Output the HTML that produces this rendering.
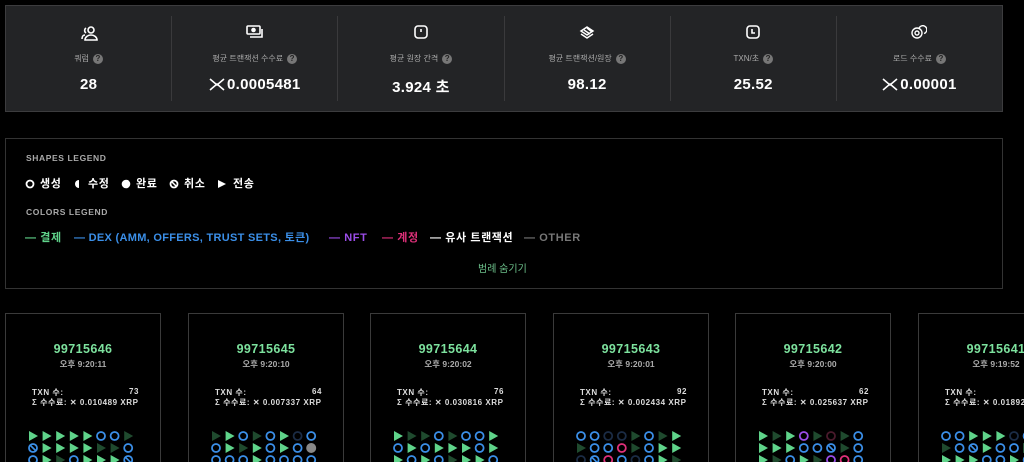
<!DOCTYPE html>
<html><head><meta charset="utf-8"><style>
*{margin:0;padding:0;box-sizing:border-box}
html,body{width:1024px;height:462px;overflow:hidden}
body{background:#000;font-family:"Liberation Sans","Noto Sans CJK KR",sans-serif;color:#fff;position:relative}
.stats{position:absolute;left:5px;top:5px;width:998px;height:107px;background:#232426;border:1px solid #3c3c3e;display:flex;padding:10px 0}
.st{flex:1;text-align:center;border-left:1px solid #3a3a3c;position:relative}
.st:first-child{border-left:none}
.ic{position:absolute;top:9px;left:0;right:0;height:18px;display:flex;justify-content:center}
.lb{position:absolute;top:37px;left:0;right:0;font-size:8px;color:#aaa;display:flex;justify-content:center;align-items:center;gap:4px}
.q{width:10px;height:10px;border-radius:50%;background:#777;color:#222;font-size:8px;font-weight:bold;line-height:10px}
.v{position:absolute;top:60px;left:0;right:0;font-size:15px;font-weight:bold;display:flex;justify-content:center;align-items:center;gap:2px;letter-spacing:.3px}
.legend{position:absolute;left:5px;top:138px;width:998px;height:151px;border:1px solid #333}
.h{position:absolute;left:20px;font-size:8.5px;font-weight:bold;color:#aaa;letter-spacing:.6px}
.a{position:absolute;font-size:11px;font-weight:bold;white-space:nowrap;line-height:12px;letter-spacing:.6px}
.card{position:absolute;top:313px;width:156px;height:160px;border:1px solid #3a3a3a}
.bn{position:absolute;top:28px;width:100%;text-align:center;color:#7de29e;font-size:12.5px;font-weight:bold;letter-spacing:.4px}
.tm{position:absolute;top:44px;width:100%;text-align:center;color:#aaa;font-size:8.5px;font-weight:bold}
.tx{position:absolute;left:26px;right:21px;font-size:8px;font-weight:bold;color:#ddd;display:flex;justify-content:space-between;white-space:nowrap;letter-spacing:.55px}
</style></head><body>
<div class="stats">
 <div class="st"><div class="ic"><svg width="18" height="16" viewBox="0 0 18 16" fill="none" stroke="#fff" stroke-width="1.6"><circle cx="11" cy="5" r="3"/><path d="M5 15c0-3 3-5 6-5s6 2 6 5z"/><path d="M6 3a3 3 0 0 0 0 5M2 14c0-2 1-4 3-4" /></svg></div><div class="lb">쿼럼 <span class="q">?</span></div><div class="v">28</div></div>
 <div class="st"><div class="ic"><svg width="18" height="14" viewBox="0 0 18 14" fill="none" stroke="#fff" stroke-width="1.6"><rect x="1" y="1" width="13" height="8" rx="1"/><circle cx="7.5" cy="5" r="1.5" fill="#fff"/><path d="M4 12h12V4"/></svg></div><div class="lb">평균 트랜잭션 수수료 <span class="q">?</span></div><div class="v"><svg width="16" height="13" viewBox="0 0 16 13" stroke="#fff" stroke-width="1.6" fill="none"><path d="M1 1l7 6 7-6M1 12l7-6 7 6"/></svg>0.0005481</div></div>
 <div class="st"><div class="ic"><svg width="14" height="14" viewBox="0 0 14 14" fill="none" stroke="#fff" stroke-width="1.6"><rect x="1" y="1" width="12" height="12" rx="3"/><path d="M7 4v3"/></svg></div><div class="lb">평균 원장 간격 <span class="q">?</span></div><div class="v">3.924 초</div></div>
 <div class="st"><div class="ic"><svg width="16" height="16" viewBox="0 0 16 16" fill="none" stroke="#fff" stroke-width="1.5"><path d="M2 6l6-4 6 4-6 4zM2 9l6 4 6-4M5 5l6 4M8 3l5 4"/></svg></div><div class="lb">평균 트랜잭션/원장 <span class="q">?</span></div><div class="v">98.12</div></div>
 <div class="st"><div class="ic"><svg width="14" height="14" viewBox="0 0 14 14" fill="none" stroke="#fff" stroke-width="1.6"><rect x="1" y="1" width="12" height="12" rx="3"/><path d="M6 4v4h3"/></svg></div><div class="lb">TXN/초 <span class="q">?</span></div><div class="v">25.52</div></div>
 <div class="st"><div class="ic"><svg width="16" height="14" viewBox="0 0 16 14" fill="none" stroke="#fff" stroke-width="1.4"><circle cx="6" cy="8" r="5"/><circle cx="6" cy="8" r="2"/><path d="M8 3.5a4 4 0 1 1 5 5"/></svg></div><div class="lb">로드 수수료 <span class="q">?</span></div><div class="v"><svg width="16" height="13" viewBox="0 0 16 13" stroke="#fff" stroke-width="1.6" fill="none"><path d="M1 1l7 6 7-6M1 12l7-6 7 6"/></svg>0.00001</div></div>
</div>
<div class="legend">
 <div class="h" style="top:14px">SHAPES LEGEND</div>
 <svg style="position:absolute;left:19px;top:40px" width="210" height="10">
  <circle cx="5" cy="5" r="3.5" fill="none" stroke="#fff" stroke-width="1.8"/>
  <path d="M54 1a4 4 0 0 0 0 8z" fill="#fff"/>
  <circle cx="101" cy="5" r="4.3" fill="#fff"/>
  <circle cx="149" cy="5" r="3.5" fill="none" stroke="#fff" stroke-width="1.8"/><path d="M146.5 2.5l5 5" stroke="#fff" stroke-width="1.5"/>
  <path d="M193 1l8 4-8 4z" fill="#fff"/>
 </svg>
 <span class="a" style="left:34px;top:39px">생성</span>
 <span class="a" style="left:82px;top:39px">수정</span>
 <span class="a" style="left:130px;top:39px">완료</span>
 <span class="a" style="left:178px;top:39px">취소</span>
 <span class="a" style="left:227px;top:39px">전송</span>
 <div class="h" style="top:68px">COLORS LEGEND</div>
 <span class="a" style="left:19px;top:93px;color:#5fd38a">— 결제</span>
 <span class="a" style="left:68px;top:93px;color:#3b8fe8;letter-spacing:.3px">— DEX (AMM, OFFERS, TRUST SETS, 토큰)</span>
 <span class="a" style="left:323px;top:93px;color:#9b4de8">— NFT</span>
 <span class="a" style="left:376px;top:93px;color:#e0307a">— 계정</span>
 <span class="a" style="left:424px;top:93px;color:#fff">— 유사 트랜잭션</span>
 <span class="a" style="left:518px;top:93px;color:#777">— OTHER</span>
 <div style="position:absolute;top:121px;left:472px;font-size:10px;color:#6cc08a">범례 숨기기</div>
</div>
<div id="cards"></div>
<script>
var data=[
["99715646","9:20:11","73","0.010489",["TTTTTOOt","XTTTTttO","OTtOTTTX"]],
["99715645","9:20:10","64","0.007337",["tTOtOToO","OTtTOTOG","OOOTOOOO"]],
["99715644","9:20:02","76","0.030816",["TttOtOOT","OTOTTTOT","TOTOtTTO"]],
["99715643","9:20:01","92","0.002434",["OOootOtT","tOOPtOTT","oXPOoOTt"]],
["99715642","9:20:00","62","0.025637",["TtTVtdtO","TTTOOXtO","TtOTtVPO"]],
["99715641","9:19:52","81","0.018920",["OOTTToOO","tOXTOOTO","TTTOOTOT"]]];
var lefts=[5,188,370,553,735,918],h="";
function sh(c,x,y){var col={T:"#5fd38a",t:"#1f4a2e",O:"#3b8fe8",o:"#1b2c45",X:"#3b8fe8",P:"#e0307a",V:"#9b4de8",d:"#4a1a2c",G:"#888"}[c];
if(c=="T"||c=="t")return '<path d="M'+(x-4)+' '+(y-5)+'l9 5-9 5z" fill="'+col+'"/>';
if(c=="G")return '<circle cx="'+x+'" cy="'+y+'" r="5" fill="'+col+'"/>';
var s='<circle cx="'+x+'" cy="'+y+'" r="4" fill="none" stroke="'+col+'" stroke-width="1.8"/>';
if(c=="X")s+='<path d="M'+(x-3)+' '+(y-3)+'l6 6" stroke="'+col+'" stroke-width="1.6"/>';return s;}
data.forEach(function(d,i){var g="";d[4].forEach(function(r,ri){for(var k=0;k<8;k++)g+=sh(r[k],27+k*13.6,122+ri*12);});
h+='<div class="card" style="left:'+lefts[i]+'px"><div class="bn">'+d[0]+'</div><div class="tm">오후 '+d[1]+'</div><div class="tx" style="top:73px"><span>TXN 수:</span><span>'+d[2]+'</span></div><div class="tx" style="top:83px"><span>Σ 수수료: ✕ '+d[3]+' XRP</span></div><svg style="position:absolute;left:0;top:0" width="156" height="160">'+g+'</svg></div>';});
document.getElementById("cards").innerHTML=h;
</script>
</body></html>
